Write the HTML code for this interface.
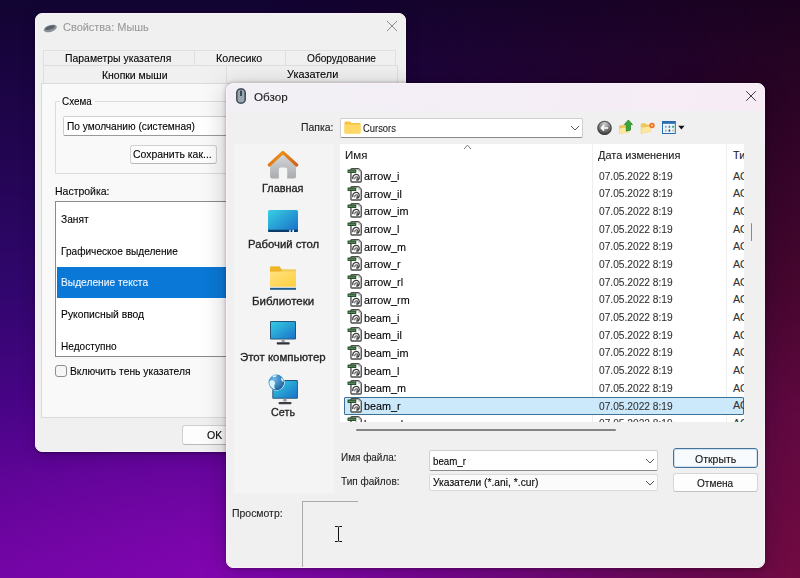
<!DOCTYPE html>
<html><head><meta charset="utf-8"><style>
html,body{margin:0;padding:0;width:800px;height:578px;overflow:hidden;}
body{position:relative;font-family:"Liberation Sans",sans-serif;}
.r{position:absolute;}
.t{position:absolute;white-space:nowrap;line-height:14px;-webkit-text-stroke:0.1px currentColor;}
</style></head><body>
<div class="r" style="left:0;top:0;width:800px;height:578px;background:linear-gradient(180deg,#120432 0px,#30066c 285px,#4a0488 415px,#6a049e 560px,#6c04a0 578px);"></div>
<div class="r" style="left:0;top:0;width:800px;height:578px;background:linear-gradient(180deg,#1c0220 0px,#46062e 285px,#600840 415px,#700a42 565px,#720a44 578px);-webkit-mask-image:linear-gradient(90deg,transparent 270px,rgba(0,0,0,0.5) 540px,#000 790px);"></div>
<div class="r" style="left:0;top:0;width:800px;height:578px;background:radial-gradient(ellipse 380px 230px at 260px 578px, rgba(160,8,200,0.45), rgba(160,8,200,0) 100%);"></div>
<div class="r" style="left:35px;top:13px;width:371px;height:439px;border-radius:7px;background:#f0f0f0;border:1px solid #fbf1fb;box-sizing:border-box;box-shadow:0 1px 3px rgba(0,0,0,0.4), 0 4px 16px rgba(0,0,0,0.15);"></div>
<svg class="r" style="left:43px;top:23.7px" width="15" height="9" viewBox="0 0 15 9"><ellipse cx="7.3" cy="4.5" rx="6.8" ry="3.4" transform="rotate(-18 7.3 4.5)" fill="#8a9098"/><ellipse cx="7" cy="3.6" rx="5" ry="1.8" transform="rotate(-18 7 3.6)" fill="#5a6068"/></svg>
<div class="t" style="left:62.5px;top:19.6px;font-size:10.6px;color:#9a9a9a;transform:scaleX(1.0357);transform-origin:0 0;">Свойства: Мышь</div>
<svg class="r" style="left:386px;top:20px" width="12" height="12" viewBox="0 0 12 12"><path d="M1 1L11 11M11 1L1 11" stroke="#8c8c8c" stroke-width="1"/></svg>
<div class="r" style="left:43px;top:50px;width:353px;height:16px;background:#f0f0f0;border:1px solid #e0e0e0;box-sizing:border-box;"></div>
<div class="r" style="left:194px;top:50px;width:1px;height:16px;background:#e0e0e0;"></div>
<div class="r" style="left:285px;top:50px;width:1px;height:16px;background:#e0e0e0;"></div>
<div class="r" style="left:43px;top:65px;width:355px;height:18px;background:#f0f0f0;border:1px solid #dedede;border-bottom:none;box-sizing:border-box;"></div>
<div class="r" style="left:226px;top:65px;width:1px;height:18px;background:#dedede;"></div>
<div class="t" style="left:65.0px;top:51.2px;font-size:10.5px;color:#000;transform:scaleX(0.9924);transform-origin:0 0;">Параметры указателя</div>
<div class="t" style="left:216.3px;top:51.2px;font-size:10.5px;color:#000;transform:scaleX(1.0190);transform-origin:0 0;">Колесико</div>
<div class="t" style="left:307.1px;top:51.2px;font-size:10.5px;color:#000;transform:scaleX(0.9656);transform-origin:0 0;">Оборудование</div>
<div class="t" style="left:101.8px;top:68.2px;font-size:10.5px;color:#000;transform:scaleX(0.9942);transform-origin:0 0;">Кнопки мыши</div>
<div class="t" style="left:287.1px;top:67.4px;font-size:10.5px;color:#000;transform:scaleX(1.0384);transform-origin:0 0;">Указатели</div>
<div class="r" style="left:41px;top:83px;width:359px;height:335px;background:#f9f9f9;border:1px solid #dadada;box-sizing:border-box;"></div>
<div class="r" style="left:55px;top:101px;width:205px;height:73px;border:1px solid #dcdcdc;box-sizing:border-box;border-radius:1px;"></div>
<div class="r" style="left:60px;top:95px;width:35px;height:11px;background:#f9f9f9;"></div>
<div class="t" style="left:62.3px;top:94.4px;font-size:10.5px;color:#000;transform:scaleX(0.9404);transform-origin:0 0;">Схема</div>
<div class="r" style="left:63px;top:116px;width:197px;height:20px;background:#fff;border:1px solid #cfcfcf;border-bottom-color:#9a9a9a;box-sizing:border-box;border-radius:2px;"></div>
<div class="t" style="left:66.6px;top:118.7px;font-size:10.5px;color:#000;transform:scaleX(0.9668);transform-origin:0 0;">По умолчанию (системная)</div>
<div class="r" style="left:130px;top:145px;width:87px;height:19px;background:#fdfdfd;border:1px solid #d0d0d0;border-bottom-color:#b8b8b8;box-sizing:border-box;border-radius:3px;"></div>
<div class="t" style="left:132.6px;top:147.4px;font-size:10.5px;color:#000;transform:scaleX(0.9948);transform-origin:0 0;">Сохранить как...</div>
<div class="t" style="left:54.7px;top:184.4px;font-size:10.5px;color:#000;transform:scaleX(0.9980);transform-origin:0 0;">Настройка:</div>
<div class="r" style="left:55px;top:201px;width:205px;height:156px;background:#fff;border:1px solid #8a8a8a;box-sizing:border-box;"></div>
<div class="r" style="left:57px;top:267px;width:203px;height:31px;background:#0a78d6;"></div>
<div class="t" style="left:61.2px;top:211.7px;font-size:10.5px;color:#000;transform:scaleX(0.9715);transform-origin:0 0;">Занят</div>
<div class="t" style="left:61.2px;top:243.5px;font-size:10.5px;color:#000;transform:scaleX(0.9628);transform-origin:0 0;">Графическое выделение</div>
<div class="t" style="left:61.2px;top:275.4px;font-size:10.5px;color:#f0f6ff;transform:scaleX(0.9720);transform-origin:0 0;">Выделение текста</div>
<div class="t" style="left:61.2px;top:307.2px;font-size:10.5px;color:#000;transform:scaleX(0.9830);transform-origin:0 0;">Рукописный ввод</div>
<div class="t" style="left:61.2px;top:338.8px;font-size:10.5px;color:#000;transform:scaleX(0.9592);transform-origin:0 0;">Недоступно</div>
<div class="r" style="left:55px;top:365px;width:12px;height:12px;background:#f6f6f6;border:1px solid #8e8e8e;box-sizing:border-box;border-radius:3px;"></div>
<div class="t" style="left:69.7px;top:364.2px;font-size:10.5px;color:#000;transform:scaleX(0.9807);transform-origin:0 0;">Включить тень указателя</div>
<div class="r" style="left:182px;top:425px;width:78px;height:20px;background:#fdfdfd;border:1px solid #d0d0d0;border-bottom-color:#b8b8b8;box-sizing:border-box;border-radius:3px;"></div>
<div class="t" style="left:206.6px;top:428.1px;font-size:10.8px;color:#000;transform:scaleX(0.9788);transform-origin:0 0;">OK</div>
<div class="r" style="left:226px;top:83px;width:539px;height:485px;border-radius:7px;background:#f0f0f0;overflow:hidden;border:1px solid #fbf1fb;box-sizing:border-box;box-shadow:0 0 4px rgba(0,0,0,0.3), 0 5px 26px rgba(0,0,0,0.22);"><div class="r" style="left:0;top:0;width:537px;height:26.5px;background:linear-gradient(90deg,#f2f0f5 0%,#f4eef6 50%,#f7ecf6 100%);"></div></div>
<svg class="r" style="left:236px;top:88px" width="10" height="16" viewBox="0 0 10 16"><rect x="0.8" y="0.8" width="8.4" height="14.4" rx="3.8" fill="#9aa6b0" stroke="#2e363e" stroke-width="1.3"/><rect x="4.2" y="2.6" width="1.6" height="5.4" fill="#1e3444"/></svg>
<div class="t" style="left:253.8px;top:90.2px;font-size:11.3px;color:#1a1a1a;transform:scaleX(1.0335);transform-origin:0 0;">Обзор</div>
<svg class="r" style="left:745px;top:90px" width="12" height="12" viewBox="0 0 12 12"><path d="M1.2 1.2L10.8 10.8M10.8 1.2L1.2 10.8" stroke="#333" stroke-width="0.95"/></svg>
<div class="t" style="left:300.8px;top:121.0px;font-size:10.3px;color:#222;transform:scaleX(1.0151);transform-origin:0 0;">Папка:</div>
<div class="r" style="left:340px;top:117.5px;width:243px;height:20.5px;background:#fff;border:1px solid #cfcfcf;border-bottom-color:#8a8a8a;box-sizing:border-box;border-radius:2px;"></div>
<svg class="r" style="left:344px;top:121px" width="17" height="13" viewBox="0 0 17 13"><path d="M0.5 1.5Q0.5 0.5 1.5 0.5H6L7.5 2H15.5Q16.5 2 16.5 3V11.5Q16.5 12.5 15.5 12.5H1.5Q0.5 12.5 0.5 11.5Z" fill="#f6c342"/><rect x="0.5" y="3.5" width="16" height="9" rx="1" fill="#ffd865"/></svg>
<div class="t" style="left:363.2px;top:120.9px;font-size:10.6px;color:#222;transform:scaleX(0.8866);transform-origin:0 0;">Cursors</div>
<svg class="r" style="left:570px;top:125px" width="10" height="6" viewBox="0 0 10 6"><path d="M1 1L5 5L9 1" stroke="#555" stroke-width="1" fill="none"/></svg>
<svg class="r" style="left:596px;top:120px" width="17" height="16" viewBox="0 0 17 16"><defs><radialGradient id="gb" cx="0.5" cy="0.25" r="0.75"><stop offset="0" stop-color="#d0d0d0"/><stop offset="0.45" stop-color="#8a8a8a"/><stop offset="1" stop-color="#2e2e2e"/></radialGradient></defs><circle cx="8.5" cy="7.9" r="7.2" fill="url(#gb)"/><circle cx="8.5" cy="7.9" r="6.6" fill="none" stroke="#404040" stroke-width="0.8"/><path d="M12 8H5.6M8.1 5.4L5.5 8L8.1 10.6" stroke="#fff" stroke-width="1.7" fill="none"/></svg>
<svg class="r" style="left:618px;top:119px" width="16" height="16" viewBox="0 0 16 16"><path d="M1 6.8L5 5.8L11.5 7.2V13.2L1 15.3Z" fill="#ecc85a"/><path d="M1.4 9.2L12 8.2L11 13.3L1.4 15.2Z" fill="#fbe7a0"/><path d="M8.3 12.2V5.6H6.3L10.4 1L14.5 5.6H12.5V11Z" fill="#34a834" stroke="#1e7a1e" stroke-width="0.7" stroke-linejoin="round"/></svg>
<svg class="r" style="left:640px;top:121px" width="16" height="14" viewBox="0 0 16 14"><path d="M0.8 2.8L4.5 1.9L6 2.9L11 4.4V10.6L0.8 13Z" fill="#ecc85a"/><path d="M1.3 6.6L11.6 5.5L10.6 10.6L1.3 12.9Z" fill="#fbe7a0"/><circle cx="12" cy="4.5" r="2.7" fill="#f06a28"/><circle cx="12" cy="4.5" r="1.3" fill="#ffc070"/></svg>
<svg class="r" style="left:662px;top:121px" width="24" height="13" viewBox="0 0 24 13"><rect x="0.5" y="0.5" width="12.8" height="12" fill="#eaf5fc" stroke="#2a6cb0" stroke-width="1"/><rect x="0.5" y="0.5" width="12.8" height="2.3" fill="#2a6cb0"/><rect x="3" y="4.8" width="1.6" height="2" fill="#9aa0a8"/><rect x="6.6" y="4.8" width="1.6" height="2" fill="#4a7aa0"/><rect x="10.2" y="4.8" width="1.6" height="2" fill="#3a9a5a"/><rect x="3" y="8.6" width="1.6" height="2" fill="#b89a9a"/><rect x="6.6" y="8.6" width="1.6" height="2" fill="#1a3a7a"/><rect x="10.2" y="8.6" width="1.6" height="2" fill="#c8b89a"/><path d="M16.2 4.8H22.6L19.4 8.5Z" fill="#111"/></svg>
<div class="r" style="left:234px;top:144px;width:100px;height:349px;background:#f4f4f4;"></div>
<svg class="r" style="left:267px;top:150px" width="32" height="30" viewBox="0 0 32 30"><defs><linearGradient id="hb" x1="0" y1="0" x2="0" y2="1"><stop offset="0" stop-color="#d6d9dc"/><stop offset="1" stop-color="#a9abad"/></linearGradient><linearGradient id="hr" x1="0" y1="0" x2="1" y2="1"><stop offset="0" stop-color="#f59a10"/><stop offset="1" stop-color="#d2601a"/></linearGradient></defs><path d="M3.1 15L16 3.5L29 15V26.4Q29 28.4 27 28.4H20.2V19.5Q20.2 17.5 18.2 17.5H13.8Q11.8 17.5 11.8 19.5V28.4H5.1Q3.1 28.4 3.1 26.4Z" fill="url(#hb)"/><path d="M2.2 15L15.9 2.3L29.8 15" stroke="url(#hr)" stroke-width="3.1" fill="none" stroke-linejoin="round" stroke-linecap="round"/></svg>
<div class="t" style="left:262.4px;top:180.6px;font-size:10.8px;color:#222;transform:scaleX(1.0097);transform-origin:0 0;-webkit-text-stroke:0.3px #222;">Главная</div>
<svg class="r" style="left:268px;top:210px" width="30" height="22" viewBox="0 0 30 22"><defs><linearGradient id="gd" x1="0" y1="0" x2="1" y2="1"><stop offset="0" stop-color="#36d0e4"/><stop offset="1" stop-color="#1a6cc6"/></linearGradient></defs><rect x="0" y="0" width="30" height="22" rx="1.5" fill="url(#gd)"/><path d="M0 19.8H30V20.5Q30 22 28.5 22H1.5Q0 22 0 20.5Z" fill="#0a3a6a"/><rect x="21.3" y="19.8" width="1.3" height="2.2" fill="#dff"/><rect x="24.4" y="19.8" width="1.6" height="2.2" fill="#dff"/></svg>
<div class="t" style="left:247.5px;top:237.1px;font-size:10.8px;color:#222;transform:scaleX(1.0482);transform-origin:0 0;-webkit-text-stroke:0.3px #222;">Рабочий стол</div>
<svg class="r" style="left:270px;top:266px" width="26" height="24" viewBox="0 0 26 24"><defs><linearGradient id="gf" x1="0" y1="0" x2="1" y2="1"><stop offset="0" stop-color="#ffe27e"/><stop offset="1" stop-color="#ffcf40"/></linearGradient></defs><path d="M0 1.5Q0 0.4 1.1 0.4H9.5L11.5 3.2H25Q26 3.2 26 4.2V20.5H0Z" fill="#f2cc5a"/><rect x="0" y="5.5" width="26" height="15" rx="0.6" fill="url(#gf)"/><path d="M0 1.5Q0 0.4 1.1 0.4H9.5L11.5 3.2V5.5H0Z" fill="#f0b428"/><rect x="0" y="21.8" width="26" height="2" fill="#1e5e8e"/></svg>
<div class="t" style="left:251.9px;top:293.5px;font-size:10.8px;color:#222;transform:scaleX(1.0626);transform-origin:0 0;-webkit-text-stroke:0.3px #222;">Библиотеки</div>
<svg class="r" style="left:270px;top:321px" width="26" height="24" viewBox="0 0 26 24"><defs><linearGradient id="gm" x1="0" y1="0" x2="1" y2="1"><stop offset="0" stop-color="#34cce2"/><stop offset="1" stop-color="#1a74c8"/></linearGradient></defs><rect x="0" y="0" width="26" height="18.6" rx="1" fill="#245478"/><rect x="1" y="1" width="24" height="16.6" fill="url(#gm)"/><rect x="11.5" y="18.6" width="3.3" height="2.6" fill="#9aa0a6"/><rect x="6.7" y="21.3" width="13" height="2.3" rx="1" fill="#2e3238"/></svg>
<div class="t" style="left:240.1px;top:350.4px;font-size:10.8px;color:#222;transform:scaleX(1.0610);transform-origin:0 0;-webkit-text-stroke:0.3px #222;">Этот компьютер</div>
<svg class="r" style="left:267px;top:373px" width="32" height="32" viewBox="0 0 32 32"><defs><linearGradient id="gn" x1="0" y1="0" x2="1" y2="1"><stop offset="0" stop-color="#34cce2"/><stop offset="1" stop-color="#1a74c8"/></linearGradient><radialGradient id="gg" cx="0.35" cy="0.3" r="0.8"><stop offset="0" stop-color="#6ab8e8"/><stop offset="1" stop-color="#1a5a98"/></radialGradient></defs><rect x="5.3" y="7" width="25.6" height="18.8" rx="1" fill="#245478"/><rect x="6.3" y="8" width="23.6" height="16.8" fill="url(#gn)"/><rect x="16.2" y="25.8" width="3.5" height="2.7" fill="#9aa0a6"/><rect x="11.5" y="28.9" width="13" height="2.3" rx="1" fill="#3a3e44"/><circle cx="9.4" cy="9.4" r="8.4" fill="#e8f6ff"/><circle cx="9.4" cy="9.4" r="7.8" fill="url(#gg)"/><path d="M2.5 8.5Q4 6 6.5 7.5Q9 9.5 7.5 12Q6.5 14.5 8.5 16.5Q4 15.5 2.5 11.5Z" fill="#d8f4ff"/><path d="M5 2.8Q7.5 1.8 10 2.5Q9 4.5 6.5 4.2Z" fill="#d8f4ff"/><path d="M14.5 4.5Q16.5 6.5 16.8 9Q15 8.5 14 6.5Z" fill="#d8f4ff"/></svg>
<div class="t" style="left:271.3px;top:404.7px;font-size:10.8px;color:#222;transform:scaleX(0.9993);transform-origin:0 0;-webkit-text-stroke:0.3px #222;">Сеть</div>
<div class="r" style="left:340px;top:144px;width:404px;height:278px;background:#fff;"></div>
<svg class="r" style="left:463px;top:144px" width="9" height="6" viewBox="0 0 9 6"><path d="M1 5L4.5 1.2L8 5" stroke="#777" stroke-width="1" fill="none"/></svg>
<div class="r" style="left:592px;top:144px;width:1px;height:278px;background:#efefef;"></div>
<div class="r" style="left:726px;top:144px;width:1px;height:278px;background:#efefef;"></div>
<div class="t" style="left:345.3px;top:147.7px;font-size:10.7px;color:#222;transform:scaleX(1.0742);transform-origin:0 0;">Имя</div>
<div class="t" style="left:598.4px;top:148.3px;font-size:10.7px;color:#222;transform:scaleX(1.0251);transform-origin:0 0;">Дата изменения</div>
<div class="r" style="left:733px;top:144px;width:11px;height:279px;overflow:hidden;"><div class="t" style="left:0.1px;top:4.3px;font-size:10.7px;color:#222;">Тип</div>
</div>
<div class="r" style="left:340px;top:166px;width:404px;height:256px;overflow:hidden;"><svg class="r" style="left:7px;top:1.0px" width="16" height="16" viewBox="0 0 16 16"><path d="M3.95 2.6Q3.95 1.75 4.8 1.75H11.6L14.25 4.4V14.1Q14.25 14.95 13.4 14.95H4.8Q3.95 14.95 3.95 14.1Z" fill="#fff" stroke="#4c4c4c" stroke-width="1.35"/><path d="M11.2 1.4V4.8H14.6Z" fill="#bdbdbd"/><rect x="0.5" y="2.5" width="8.8" height="3.4" rx="0.6" fill="#24502a"/><path d="M1.7 4.25H8.2" stroke="#a8d4a8" stroke-width="1" stroke-dasharray="1 0.9"/><path d="M5.8 12.2Q5.3 8.2 8.8 7.4Q12.2 7.2 12.2 10.6Q12 13.2 9.2 13.2" stroke="#3c3c3c" stroke-width="1.3" fill="none"/><path d="M7.6 12.4Q7.8 9.4 10.3 9.9Q11.2 11.6 9.4 12.2" stroke="#606060" stroke-width="1.1" fill="none"/></svg><div class="t" style="left:24.3px;top:3.0px;font-size:10.6px;color:#000;transform:scaleX(1.02);transform-origin:0 0;">arrow_i</div>
<div class="t" style="left:259.3px;top:2.6px;font-size:11.4px;color:#333;transform:scaleX(0.8950);transform-origin:0 0;">07.05.2022 8:19</div>
<div class="t" style="left:392.9px;top:2.6px;font-size:10.8px;color:#333;">ACUR</div>
<svg class="r" style="left:7px;top:18.7px" width="16" height="16" viewBox="0 0 16 16"><path d="M3.95 2.6Q3.95 1.75 4.8 1.75H11.6L14.25 4.4V14.1Q14.25 14.95 13.4 14.95H4.8Q3.95 14.95 3.95 14.1Z" fill="#fff" stroke="#4c4c4c" stroke-width="1.35"/><path d="M11.2 1.4V4.8H14.6Z" fill="#bdbdbd"/><rect x="0.5" y="2.5" width="8.8" height="3.4" rx="0.6" fill="#24502a"/><path d="M1.7 4.25H8.2" stroke="#a8d4a8" stroke-width="1" stroke-dasharray="1 0.9"/><path d="M5.8 12.2Q5.3 8.2 8.8 7.4Q12.2 7.2 12.2 10.6Q12 13.2 9.2 13.2" stroke="#3c3c3c" stroke-width="1.3" fill="none"/><path d="M7.6 12.4Q7.8 9.4 10.3 9.9Q11.2 11.6 9.4 12.2" stroke="#606060" stroke-width="1.1" fill="none"/></svg><div class="t" style="left:24.3px;top:20.7px;font-size:10.6px;color:#000;transform:scaleX(1.02);transform-origin:0 0;">arrow_il</div>
<div class="t" style="left:259.3px;top:20.3px;font-size:11.4px;color:#333;transform:scaleX(0.8950);transform-origin:0 0;">07.05.2022 8:19</div>
<div class="t" style="left:392.9px;top:20.2px;font-size:10.8px;color:#333;">ACUR</div>
<svg class="r" style="left:7px;top:36.4px" width="16" height="16" viewBox="0 0 16 16"><path d="M3.95 2.6Q3.95 1.75 4.8 1.75H11.6L14.25 4.4V14.1Q14.25 14.95 13.4 14.95H4.8Q3.95 14.95 3.95 14.1Z" fill="#fff" stroke="#4c4c4c" stroke-width="1.35"/><path d="M11.2 1.4V4.8H14.6Z" fill="#bdbdbd"/><rect x="0.5" y="2.5" width="8.8" height="3.4" rx="0.6" fill="#24502a"/><path d="M1.7 4.25H8.2" stroke="#a8d4a8" stroke-width="1" stroke-dasharray="1 0.9"/><path d="M5.8 12.2Q5.3 8.2 8.8 7.4Q12.2 7.2 12.2 10.6Q12 13.2 9.2 13.2" stroke="#3c3c3c" stroke-width="1.3" fill="none"/><path d="M7.6 12.4Q7.8 9.4 10.3 9.9Q11.2 11.6 9.4 12.2" stroke="#606060" stroke-width="1.1" fill="none"/></svg><div class="t" style="left:24.3px;top:38.4px;font-size:10.6px;color:#000;transform:scaleX(1.02);transform-origin:0 0;">arrow_im</div>
<div class="t" style="left:259.3px;top:38.0px;font-size:11.4px;color:#333;transform:scaleX(0.8950);transform-origin:0 0;">07.05.2022 8:19</div>
<div class="t" style="left:392.9px;top:37.9px;font-size:10.8px;color:#333;">ACUR</div>
<svg class="r" style="left:7px;top:54.0px" width="16" height="16" viewBox="0 0 16 16"><path d="M3.95 2.6Q3.95 1.75 4.8 1.75H11.6L14.25 4.4V14.1Q14.25 14.95 13.4 14.95H4.8Q3.95 14.95 3.95 14.1Z" fill="#fff" stroke="#4c4c4c" stroke-width="1.35"/><path d="M11.2 1.4V4.8H14.6Z" fill="#bdbdbd"/><rect x="0.5" y="2.5" width="8.8" height="3.4" rx="0.6" fill="#24502a"/><path d="M1.7 4.25H8.2" stroke="#a8d4a8" stroke-width="1" stroke-dasharray="1 0.9"/><path d="M5.8 12.2Q5.3 8.2 8.8 7.4Q12.2 7.2 12.2 10.6Q12 13.2 9.2 13.2" stroke="#3c3c3c" stroke-width="1.3" fill="none"/><path d="M7.6 12.4Q7.8 9.4 10.3 9.9Q11.2 11.6 9.4 12.2" stroke="#606060" stroke-width="1.1" fill="none"/></svg><div class="t" style="left:24.3px;top:56.1px;font-size:10.6px;color:#000;transform:scaleX(1.02);transform-origin:0 0;">arrow_l</div>
<div class="t" style="left:259.3px;top:55.7px;font-size:11.4px;color:#333;transform:scaleX(0.8950);transform-origin:0 0;">07.05.2022 8:19</div>
<div class="t" style="left:392.9px;top:55.6px;font-size:10.8px;color:#333;">ACUR</div>
<svg class="r" style="left:7px;top:71.7px" width="16" height="16" viewBox="0 0 16 16"><path d="M3.95 2.6Q3.95 1.75 4.8 1.75H11.6L14.25 4.4V14.1Q14.25 14.95 13.4 14.95H4.8Q3.95 14.95 3.95 14.1Z" fill="#fff" stroke="#4c4c4c" stroke-width="1.35"/><path d="M11.2 1.4V4.8H14.6Z" fill="#bdbdbd"/><rect x="0.5" y="2.5" width="8.8" height="3.4" rx="0.6" fill="#24502a"/><path d="M1.7 4.25H8.2" stroke="#a8d4a8" stroke-width="1" stroke-dasharray="1 0.9"/><path d="M5.8 12.2Q5.3 8.2 8.8 7.4Q12.2 7.2 12.2 10.6Q12 13.2 9.2 13.2" stroke="#3c3c3c" stroke-width="1.3" fill="none"/><path d="M7.6 12.4Q7.8 9.4 10.3 9.9Q11.2 11.6 9.4 12.2" stroke="#606060" stroke-width="1.1" fill="none"/></svg><div class="t" style="left:24.3px;top:73.7px;font-size:10.6px;color:#000;transform:scaleX(1.02);transform-origin:0 0;">arrow_m</div>
<div class="t" style="left:259.3px;top:73.4px;font-size:11.4px;color:#333;transform:scaleX(0.8950);transform-origin:0 0;">07.05.2022 8:19</div>
<div class="t" style="left:392.9px;top:73.3px;font-size:10.8px;color:#333;">ACUR</div>
<svg class="r" style="left:7px;top:89.4px" width="16" height="16" viewBox="0 0 16 16"><path d="M3.95 2.6Q3.95 1.75 4.8 1.75H11.6L14.25 4.4V14.1Q14.25 14.95 13.4 14.95H4.8Q3.95 14.95 3.95 14.1Z" fill="#fff" stroke="#4c4c4c" stroke-width="1.35"/><path d="M11.2 1.4V4.8H14.6Z" fill="#bdbdbd"/><rect x="0.5" y="2.5" width="8.8" height="3.4" rx="0.6" fill="#24502a"/><path d="M1.7 4.25H8.2" stroke="#a8d4a8" stroke-width="1" stroke-dasharray="1 0.9"/><path d="M5.8 12.2Q5.3 8.2 8.8 7.4Q12.2 7.2 12.2 10.6Q12 13.2 9.2 13.2" stroke="#3c3c3c" stroke-width="1.3" fill="none"/><path d="M7.6 12.4Q7.8 9.4 10.3 9.9Q11.2 11.6 9.4 12.2" stroke="#606060" stroke-width="1.1" fill="none"/></svg><div class="t" style="left:24.3px;top:91.4px;font-size:10.6px;color:#000;transform:scaleX(1.02);transform-origin:0 0;">arrow_r</div>
<div class="t" style="left:259.3px;top:91.0px;font-size:11.4px;color:#333;transform:scaleX(0.8950);transform-origin:0 0;">07.05.2022 8:19</div>
<div class="t" style="left:392.9px;top:91.0px;font-size:10.8px;color:#333;">ACUR</div>
<svg class="r" style="left:7px;top:107.1px" width="16" height="16" viewBox="0 0 16 16"><path d="M3.95 2.6Q3.95 1.75 4.8 1.75H11.6L14.25 4.4V14.1Q14.25 14.95 13.4 14.95H4.8Q3.95 14.95 3.95 14.1Z" fill="#fff" stroke="#4c4c4c" stroke-width="1.35"/><path d="M11.2 1.4V4.8H14.6Z" fill="#bdbdbd"/><rect x="0.5" y="2.5" width="8.8" height="3.4" rx="0.6" fill="#24502a"/><path d="M1.7 4.25H8.2" stroke="#a8d4a8" stroke-width="1" stroke-dasharray="1 0.9"/><path d="M5.8 12.2Q5.3 8.2 8.8 7.4Q12.2 7.2 12.2 10.6Q12 13.2 9.2 13.2" stroke="#3c3c3c" stroke-width="1.3" fill="none"/><path d="M7.6 12.4Q7.8 9.4 10.3 9.9Q11.2 11.6 9.4 12.2" stroke="#606060" stroke-width="1.1" fill="none"/></svg><div class="t" style="left:24.3px;top:109.1px;font-size:10.6px;color:#000;transform:scaleX(1.02);transform-origin:0 0;">arrow_rl</div>
<div class="t" style="left:259.3px;top:108.7px;font-size:11.4px;color:#333;transform:scaleX(0.8950);transform-origin:0 0;">07.05.2022 8:19</div>
<div class="t" style="left:392.9px;top:108.6px;font-size:10.8px;color:#333;">ACUR</div>
<svg class="r" style="left:7px;top:124.8px" width="16" height="16" viewBox="0 0 16 16"><path d="M3.95 2.6Q3.95 1.75 4.8 1.75H11.6L14.25 4.4V14.1Q14.25 14.95 13.4 14.95H4.8Q3.95 14.95 3.95 14.1Z" fill="#fff" stroke="#4c4c4c" stroke-width="1.35"/><path d="M11.2 1.4V4.8H14.6Z" fill="#bdbdbd"/><rect x="0.5" y="2.5" width="8.8" height="3.4" rx="0.6" fill="#24502a"/><path d="M1.7 4.25H8.2" stroke="#a8d4a8" stroke-width="1" stroke-dasharray="1 0.9"/><path d="M5.8 12.2Q5.3 8.2 8.8 7.4Q12.2 7.2 12.2 10.6Q12 13.2 9.2 13.2" stroke="#3c3c3c" stroke-width="1.3" fill="none"/><path d="M7.6 12.4Q7.8 9.4 10.3 9.9Q11.2 11.6 9.4 12.2" stroke="#606060" stroke-width="1.1" fill="none"/></svg><div class="t" style="left:24.3px;top:126.8px;font-size:10.6px;color:#000;transform:scaleX(1.02);transform-origin:0 0;">arrow_rm</div>
<div class="t" style="left:259.3px;top:126.4px;font-size:11.4px;color:#333;transform:scaleX(0.8950);transform-origin:0 0;">07.05.2022 8:19</div>
<div class="t" style="left:392.9px;top:126.3px;font-size:10.8px;color:#333;">ACUR</div>
<svg class="r" style="left:7px;top:142.4px" width="16" height="16" viewBox="0 0 16 16"><path d="M3.95 2.6Q3.95 1.75 4.8 1.75H11.6L14.25 4.4V14.1Q14.25 14.95 13.4 14.95H4.8Q3.95 14.95 3.95 14.1Z" fill="#fff" stroke="#4c4c4c" stroke-width="1.35"/><path d="M11.2 1.4V4.8H14.6Z" fill="#bdbdbd"/><rect x="0.5" y="2.5" width="8.8" height="3.4" rx="0.6" fill="#24502a"/><path d="M1.7 4.25H8.2" stroke="#a8d4a8" stroke-width="1" stroke-dasharray="1 0.9"/><path d="M5.8 12.2Q5.3 8.2 8.8 7.4Q12.2 7.2 12.2 10.6Q12 13.2 9.2 13.2" stroke="#3c3c3c" stroke-width="1.3" fill="none"/><path d="M7.6 12.4Q7.8 9.4 10.3 9.9Q11.2 11.6 9.4 12.2" stroke="#606060" stroke-width="1.1" fill="none"/></svg><div class="t" style="left:24.3px;top:144.5px;font-size:10.6px;color:#000;transform:scaleX(1.02);transform-origin:0 0;">beam_i</div>
<div class="t" style="left:259.3px;top:144.1px;font-size:11.4px;color:#333;transform:scaleX(0.8950);transform-origin:0 0;">07.05.2022 8:19</div>
<div class="t" style="left:392.9px;top:144.0px;font-size:10.8px;color:#333;">ACUR</div>
<svg class="r" style="left:7px;top:160.1px" width="16" height="16" viewBox="0 0 16 16"><path d="M3.95 2.6Q3.95 1.75 4.8 1.75H11.6L14.25 4.4V14.1Q14.25 14.95 13.4 14.95H4.8Q3.95 14.95 3.95 14.1Z" fill="#fff" stroke="#4c4c4c" stroke-width="1.35"/><path d="M11.2 1.4V4.8H14.6Z" fill="#bdbdbd"/><rect x="0.5" y="2.5" width="8.8" height="3.4" rx="0.6" fill="#24502a"/><path d="M1.7 4.25H8.2" stroke="#a8d4a8" stroke-width="1" stroke-dasharray="1 0.9"/><path d="M5.8 12.2Q5.3 8.2 8.8 7.4Q12.2 7.2 12.2 10.6Q12 13.2 9.2 13.2" stroke="#3c3c3c" stroke-width="1.3" fill="none"/><path d="M7.6 12.4Q7.8 9.4 10.3 9.9Q11.2 11.6 9.4 12.2" stroke="#606060" stroke-width="1.1" fill="none"/></svg><div class="t" style="left:24.3px;top:162.1px;font-size:10.6px;color:#000;transform:scaleX(1.02);transform-origin:0 0;">beam_il</div>
<div class="t" style="left:259.3px;top:161.8px;font-size:11.4px;color:#333;transform:scaleX(0.8950);transform-origin:0 0;">07.05.2022 8:19</div>
<div class="t" style="left:392.9px;top:161.7px;font-size:10.8px;color:#333;">ACUR</div>
<svg class="r" style="left:7px;top:177.8px" width="16" height="16" viewBox="0 0 16 16"><path d="M3.95 2.6Q3.95 1.75 4.8 1.75H11.6L14.25 4.4V14.1Q14.25 14.95 13.4 14.95H4.8Q3.95 14.95 3.95 14.1Z" fill="#fff" stroke="#4c4c4c" stroke-width="1.35"/><path d="M11.2 1.4V4.8H14.6Z" fill="#bdbdbd"/><rect x="0.5" y="2.5" width="8.8" height="3.4" rx="0.6" fill="#24502a"/><path d="M1.7 4.25H8.2" stroke="#a8d4a8" stroke-width="1" stroke-dasharray="1 0.9"/><path d="M5.8 12.2Q5.3 8.2 8.8 7.4Q12.2 7.2 12.2 10.6Q12 13.2 9.2 13.2" stroke="#3c3c3c" stroke-width="1.3" fill="none"/><path d="M7.6 12.4Q7.8 9.4 10.3 9.9Q11.2 11.6 9.4 12.2" stroke="#606060" stroke-width="1.1" fill="none"/></svg><div class="t" style="left:24.3px;top:179.8px;font-size:10.6px;color:#000;transform:scaleX(1.02);transform-origin:0 0;">beam_im</div>
<div class="t" style="left:259.3px;top:179.4px;font-size:11.4px;color:#333;transform:scaleX(0.8950);transform-origin:0 0;">07.05.2022 8:19</div>
<div class="t" style="left:392.9px;top:179.4px;font-size:10.8px;color:#333;">ACUR</div>
<svg class="r" style="left:7px;top:195.5px" width="16" height="16" viewBox="0 0 16 16"><path d="M3.95 2.6Q3.95 1.75 4.8 1.75H11.6L14.25 4.4V14.1Q14.25 14.95 13.4 14.95H4.8Q3.95 14.95 3.95 14.1Z" fill="#fff" stroke="#4c4c4c" stroke-width="1.35"/><path d="M11.2 1.4V4.8H14.6Z" fill="#bdbdbd"/><rect x="0.5" y="2.5" width="8.8" height="3.4" rx="0.6" fill="#24502a"/><path d="M1.7 4.25H8.2" stroke="#a8d4a8" stroke-width="1" stroke-dasharray="1 0.9"/><path d="M5.8 12.2Q5.3 8.2 8.8 7.4Q12.2 7.2 12.2 10.6Q12 13.2 9.2 13.2" stroke="#3c3c3c" stroke-width="1.3" fill="none"/><path d="M7.6 12.4Q7.8 9.4 10.3 9.9Q11.2 11.6 9.4 12.2" stroke="#606060" stroke-width="1.1" fill="none"/></svg><div class="t" style="left:24.3px;top:197.5px;font-size:10.6px;color:#000;transform:scaleX(1.02);transform-origin:0 0;">beam_l</div>
<div class="t" style="left:259.3px;top:197.1px;font-size:11.4px;color:#333;transform:scaleX(0.8950);transform-origin:0 0;">07.05.2022 8:19</div>
<div class="t" style="left:392.9px;top:197.0px;font-size:10.8px;color:#333;">ACUR</div>
<svg class="r" style="left:7px;top:213.2px" width="16" height="16" viewBox="0 0 16 16"><path d="M3.95 2.6Q3.95 1.75 4.8 1.75H11.6L14.25 4.4V14.1Q14.25 14.95 13.4 14.95H4.8Q3.95 14.95 3.95 14.1Z" fill="#fff" stroke="#4c4c4c" stroke-width="1.35"/><path d="M11.2 1.4V4.8H14.6Z" fill="#bdbdbd"/><rect x="0.5" y="2.5" width="8.8" height="3.4" rx="0.6" fill="#24502a"/><path d="M1.7 4.25H8.2" stroke="#a8d4a8" stroke-width="1" stroke-dasharray="1 0.9"/><path d="M5.8 12.2Q5.3 8.2 8.8 7.4Q12.2 7.2 12.2 10.6Q12 13.2 9.2 13.2" stroke="#3c3c3c" stroke-width="1.3" fill="none"/><path d="M7.6 12.4Q7.8 9.4 10.3 9.9Q11.2 11.6 9.4 12.2" stroke="#606060" stroke-width="1.1" fill="none"/></svg><div class="t" style="left:24.3px;top:215.2px;font-size:10.6px;color:#000;transform:scaleX(1.02);transform-origin:0 0;">beam_m</div>
<div class="t" style="left:259.3px;top:214.8px;font-size:11.4px;color:#333;transform:scaleX(0.8950);transform-origin:0 0;">07.05.2022 8:19</div>
<div class="t" style="left:392.9px;top:214.7px;font-size:10.8px;color:#333;">ACUR</div>
<div class="r" style="left:3.5px;top:231px;width:400.5px;height:18px;background:#cce8fb;border:1px solid #3f7196;box-sizing:border-box;border-radius:1px;"></div>
<svg class="r" style="left:7px;top:230.8px" width="16" height="16" viewBox="0 0 16 16"><path d="M3.95 2.6Q3.95 1.75 4.8 1.75H11.6L14.25 4.4V14.1Q14.25 14.95 13.4 14.95H4.8Q3.95 14.95 3.95 14.1Z" fill="#fff" stroke="#4c4c4c" stroke-width="1.35"/><path d="M11.2 1.4V4.8H14.6Z" fill="#bdbdbd"/><rect x="0.5" y="2.5" width="8.8" height="3.4" rx="0.6" fill="#24502a"/><path d="M1.7 4.25H8.2" stroke="#a8d4a8" stroke-width="1" stroke-dasharray="1 0.9"/><path d="M5.8 12.2Q5.3 8.2 8.8 7.4Q12.2 7.2 12.2 10.6Q12 13.2 9.2 13.2" stroke="#3c3c3c" stroke-width="1.3" fill="none"/><path d="M7.6 12.4Q7.8 9.4 10.3 9.9Q11.2 11.6 9.4 12.2" stroke="#606060" stroke-width="1.1" fill="none"/></svg><div class="t" style="left:24.3px;top:232.9px;font-size:10.6px;color:#000;transform:scaleX(1.02);transform-origin:0 0;">beam_r</div>
<div class="t" style="left:259.3px;top:232.5px;font-size:11.4px;color:#333;transform:scaleX(0.8950);transform-origin:0 0;">07.05.2022 8:19</div>
<div class="t" style="left:392.9px;top:232.4px;font-size:10.8px;color:#333;">ACUR</div>
<svg class="r" style="left:7px;top:248.5px" width="16" height="16" viewBox="0 0 16 16"><path d="M3.95 2.6Q3.95 1.75 4.8 1.75H11.6L14.25 4.4V14.1Q14.25 14.95 13.4 14.95H4.8Q3.95 14.95 3.95 14.1Z" fill="#fff" stroke="#4c4c4c" stroke-width="1.35"/><path d="M11.2 1.4V4.8H14.6Z" fill="#bdbdbd"/><rect x="0.5" y="2.5" width="8.8" height="3.4" rx="0.6" fill="#24502a"/><path d="M1.7 4.25H8.2" stroke="#a8d4a8" stroke-width="1" stroke-dasharray="1 0.9"/><path d="M5.8 12.2Q5.3 8.2 8.8 7.4Q12.2 7.2 12.2 10.6Q12 13.2 9.2 13.2" stroke="#3c3c3c" stroke-width="1.3" fill="none"/><path d="M7.6 12.4Q7.8 9.4 10.3 9.9Q11.2 11.6 9.4 12.2" stroke="#606060" stroke-width="1.1" fill="none"/></svg><div class="t" style="left:24.3px;top:250.5px;font-size:10.6px;color:#000;transform:scaleX(1.02);transform-origin:0 0;">beam_rl</div>
<div class="t" style="left:259.3px;top:250.2px;font-size:11.4px;color:#333;transform:scaleX(0.8950);transform-origin:0 0;">07.05.2022 8:19</div>
<div class="t" style="left:392.9px;top:250.1px;font-size:10.8px;color:#333;">ACUR</div>
</div>
<div class="r" style="left:744px;top:144px;width:21px;height:279px;background:#f0f0f0;"></div>
<div class="r" style="left:750.8px;top:223px;width:1.6000000000000227px;height:18px;background:#8a8a8a;border-radius:1px;"></div>
<div class="r" style="left:356px;top:429px;width:260px;height:2px;background:#858585;border-radius:1px;"></div>
<div class="t" style="left:340.8px;top:451.1px;font-size:10.0px;color:#222;transform:scaleX(0.9943);transform-origin:0 0;">Имя файла:</div>
<div class="t" style="left:340.8px;top:474.7px;font-size:10.0px;color:#222;transform:scaleX(1.0011);transform-origin:0 0;">Тип файлов:</div>
<div class="r" style="left:429px;top:450px;width:229px;height:21px;background:#fff;border:1px solid #cfcfcf;border-bottom-color:#8a8a8a;box-sizing:border-box;border-radius:2px;"></div>
<div class="t" style="left:432.9px;top:455.3px;font-size:10.0px;color:#000;transform:scaleX(0.9725);transform-origin:0 0;">beam_r</div>
<svg class="r" style="left:645px;top:458px" width="10" height="6" viewBox="0 0 10 6"><path d="M1 1L5 5L9 1" stroke="#555" stroke-width="1" fill="none"/></svg>
<div class="r" style="left:429px;top:474px;width:229px;height:17px;background:#fbfbfb;border:1px solid #dadada;box-sizing:border-box;border-radius:2px;"></div>
<div class="t" style="left:433.1px;top:476.1px;font-size:10.1px;color:#000;transform:scaleX(1.0173);transform-origin:0 0;">Указатели (*.ani, *.cur)</div>
<svg class="r" style="left:645px;top:480px" width="10" height="6" viewBox="0 0 10 6"><path d="M1 1L5 5L9 1" stroke="#555" stroke-width="1" fill="none"/></svg>
<div class="r" style="left:673px;top:448px;width:85px;height:20px;background:#f8fbfd;border:1px solid #42749e;box-sizing:border-box;border-radius:3px;box-shadow:inset 0 0 0 1px #cfe0ee;"></div>
<div class="t" style="left:694.5px;top:451.5px;font-size:10.5px;color:#111;transform:scaleX(1.0012);transform-origin:0 0;">Открыть</div>
<div class="r" style="left:673px;top:473px;width:85px;height:19px;background:#fdfdfd;border:1px solid #d6d6d6;border-bottom-color:#c0c0c0;box-sizing:border-box;border-radius:3px;"></div>
<div class="t" style="left:696.7px;top:475.9px;font-size:10.5px;color:#111;transform:scaleX(0.9595);transform-origin:0 0;">Отмена</div>
<div class="t" style="left:231.7px;top:506.7px;font-size:10.3px;color:#222;transform:scaleX(1.0145);transform-origin:0 0;">Просмотр:</div>
<div class="r" style="left:302px;top:501px;width:56px;height:1px;background:#aaaaaa;"></div>
<div class="r" style="left:302px;top:501px;width:1px;height:66px;background:#aaaaaa;"></div>
<svg class="r" style="left:334px;top:525px" width="9" height="18" viewBox="0 0 9 18"><path d="M1 1.5H3.5Q4.5 1.5 4.5 2.5V15.5Q4.5 16.5 3.5 16.5H1M8 1.5H5.5Q4.5 1.5 4.5 2.5M4.5 15.5Q4.5 16.5 5.5 16.5H8" stroke="#111" stroke-width="1" fill="none"/></svg>
</body></html>
